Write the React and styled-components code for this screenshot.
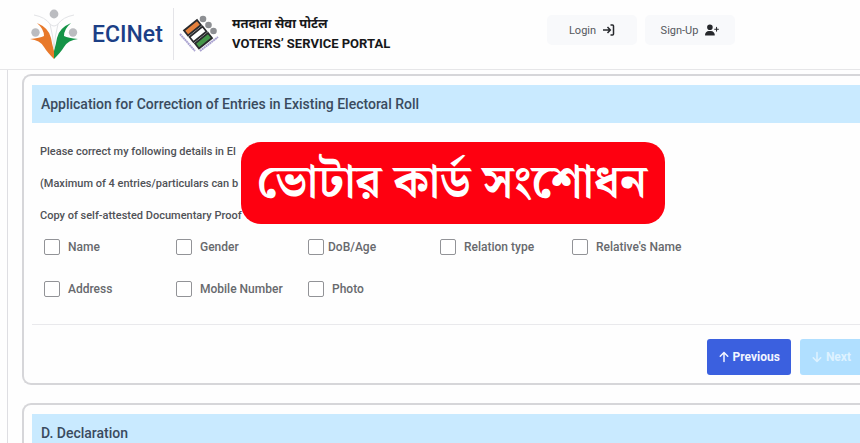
import React from 'react';
import styled, { createGlobalStyle } from 'styled-components';
import { FaUserPlus, FaArrowUp, FaArrowDown } from 'react-icons/fa6';

const GlobalStyle = createGlobalStyle`
  * {
    box-sizing: border-box;
  }

  body {
    margin: 0;
    background: #fefefe;
    color: #3c3f44;
    font-family: Roboto, 'Noto Sans', sans-serif;
    overflow: hidden;
  }
`;

const Page = styled.div`
  position: relative;
  height: 100vh;
  overflow: hidden;
`;

const Header = styled.header`
  display: flex;
  align-items: flex-start;
  height: 70px;
  padding-left: 28px;
  border-bottom: 1px solid #e6e6e8;
`;

const Brand = styled.a`
  display: flex;
  align-items: center;
  width: 146px;
  height: 52px;
  margin-top: 8px;
  border-right: 1px solid #e4e4e8;
  color: #1c3f86;
  font-size: 23px;
  font-weight: 500;
  text-decoration: none;

  svg {
    margin-right: 12px;
  }
`;

const Portal = styled.a`
  display: flex;
  align-items: center;
  gap: 12px;
  width: 373px;
  height: 52px;
  margin-top: 8px;
  padding-left: 5px;
  color: #17181a;
  text-decoration: none;
`;

const PortalText = styled.span`
  display: flex;
  flex-direction: column;
  font-size: 13px;
  font-weight: 700;
  line-height: 20px;
`;

const Nav = styled.nav`
  display: flex;
  gap: 8px;
  margin-top: 15px;
`;

const NavButton = styled.button`
  display: flex;
  align-items: center;
  justify-content: center;
  gap: 7px;
  width: 90px;
  height: 30px;
  padding: 0;
  border: 0;
  border-radius: 5px;
  background: #f8f9fb;
  color: #55585d;
  font: 400 11px Roboto, sans-serif;

  svg {
    color: #26282c;
  }
`;

const Main = styled.main`
  display: flex;
  flex-direction: column;
  gap: 18px;
  margin-left: 7px;
  padding: 4px 0 0 14px;
  border-left: 1px solid #dedee2;
`;

const Card = styled.section`
  padding: 9px 0 0 8px;
  border: 2px solid #d6d6d9;
  border-right: 0;
  border-radius: 9px 0 0 9px;
`;

const CardTitle = styled.h2`
  margin: 0;
  padding: 0 9px;
  background: #c9eaff;
  color: #3a4b5e;
  font-size: 14px;
  font-weight: 500;
  line-height: 38px;
`;

const Notes = styled.div`
  padding: 13px 8px 0;

  p {
    margin: 0;
    color: #505257;
    font-size: 11px;
    font-weight: 500;
    line-height: 32px;
  }
`;

const Options = styled.div`
  display: grid;
  grid-template-columns: repeat(5, 132px);
  row-gap: 26px;
  padding: 7px 0 27px 12px;
`;

const Option = styled.label`
  display: flex;
  align-items: center;
  gap: ${(props) => (props.$tight ? '4px' : '8px')};
  height: 16px;
  color: #67696d;
  font-size: 12px;
  font-weight: 500;
  white-space: nowrap;
`;

const Checkbox = styled.input`
  appearance: none;
  width: 16px;
  height: 16px;
  margin: 0;
  border: 1px solid #929397;
  border-radius: 2px;
  background: #fff;

  &:checked {
    background: #3b5fe0;
  }
`;

const Actions = styled.div`
  display: flex;
  justify-content: flex-end;
  gap: 9px;
  padding: 14px 0 8px;
  border-top: 1px solid #e9e9ec;
`;

const ActionButton = styled.button`
  display: flex;
  align-items: center;
  justify-content: center;
  gap: 3px;
  height: 36px;
  padding: 0 11px;
  border: 0;
  border-radius: 3px;
  background: #3b60df;
  color: #f2f5ff;
  font: 700 12px Roboto, sans-serif;

  &:disabled {
    padding-right: 9px;
    border-radius: 3px 0 0 3px;
    background: #b0dfff;
    color: #def2ff;
  }
`;

const Banner = styled.div`
  position: absolute;
  top: 142px;
  left: 241px;
  padding: 2px 18px 0 16px;
  border-radius: 20px;
  background: #fe0010;
  color: #fff;
  font-family: 'Noto Serif Bengali', 'Noto Sans Bengali', 'Lohit Bengali', serif;
  font-size: 47px;
  font-weight: 700;
  line-height: 80px;
  white-space: nowrap;
`;

const EciLogo = () => (
  <svg width="52" height="52" viewBox="0 0 52 52" aria-hidden="true">
    <g fill="#bbbcc0">
      <circle cx="26" cy="6" r="4.4" />
      <circle cx="7.5" cy="24.5" r="4.2" />
      <circle cx="45" cy="24.5" r="4.2" />
    </g>
    <path
      d="M6 7Q17 9 22 16Q26 20 30 16Q35 9 46 7M22 16Q25 28 26 40M30 16Q27 28 26 40"
      fill="none"
      stroke="#e2e3e6"
      strokeWidth="1"
    />
    <path d="M9 15Q21 20 23 30Q24 36 26 43V51Q19 44 16 39Q12 32 2 31Q12 30 16 28Q16 21 9 15Z" fill="#e8792b" />
    <path d="M43 15Q31 20 29 30Q28 36 26 43V51Q33 44 36 39Q40 32 50 31Q40 30 36 28Q36 21 43 15Z" fill="#159447" />
  </svg>
);

const PortalLogo = () => (
  <svg width="41" height="38" viewBox="0 0 41 38" aria-hidden="true">
    <g fill="#8d8f93">
      <circle cx="24" cy="4" r="3.3" />
      <circle cx="29.5" cy="10" r="3.3" />
      <circle cx="34.5" cy="16" r="3.3" />
    </g>
    <g stroke="#292a2d" strokeWidth="1.8">
      <path d="M5 15.5L18 5L22 10L9 20.5Z" fill="#e5813d" />
      <path d="M10.5 22L23.5 11.5L27.5 16.5L14.5 27Z" fill="#fff" />
      <path d="M16 28.5L29 18L33 23L20 33.5Z" fill="#45964a" />
    </g>
    <path d="M1 19L16 36M21 36L39 22" fill="none" stroke="#a9a2d0" strokeWidth="2" strokeDasharray="2 .4" />
  </svg>
);

const LoginIcon = () => (
  <svg width="12" height="12" viewBox="0 0 12 12" fill="none" stroke="currentColor" strokeWidth="1.5" aria-hidden="true">
    <path d="M0 6H7M4.5 3L7.3 6L4.5 9M7.5 1H9.5Q10.5 1 10.5 2V10Q10.5 11 9.5 11H7.5" />
  </svg>
);

const options = [
  { label: 'Name' },
  { label: 'Gender' },
  { label: 'DoB/Age', tight: true },
  { label: 'Relation type' },
  { label: "Relative's Name" },
  { label: 'Address' },
  { label: 'Mobile Number' },
  { label: 'Photo' },
];

const App = () => {
  return (
    <Page>
      <GlobalStyle />
      <Header>
        <Brand href="#">
          <EciLogo />
          ECINet
        </Brand>
        <Portal href="#">
          <PortalLogo />
          <PortalText>
            <span lang="hi">मतदाता सेवा पोर्टल</span>
            <span>VOTERS’ SERVICE PORTAL</span>
          </PortalText>
        </Portal>
        <Nav>
          <NavButton type="button">
            Login
            <LoginIcon />
          </NavButton>
          <NavButton type="button">
            Sign-Up
            <FaUserPlus size={14} />
          </NavButton>
        </Nav>
      </Header>
      <Main>
        <Card>
          <CardTitle>Application for Correction of Entries in Existing Electoral Roll</CardTitle>
          <Notes>
            <p>Please correct my following details in El</p>
            <p>(Maximum of 4 entries/particulars can b</p>
            <p>Copy of self-attested Documentary Proof</p>
          </Notes>
          <Options>
            {options.map(({ label, tight }) => (
              <Option key={label} $tight={tight}>
                <Checkbox type="checkbox" />
                {label}
              </Option>
            ))}
          </Options>
          <Actions>
            <ActionButton type="button">
              <FaArrowUp size={12} />
              Previous
            </ActionButton>
            <ActionButton type="button" disabled>
              <FaArrowDown size={12} />
              Next
            </ActionButton>
          </Actions>
        </Card>
        <Card>
          <CardTitle>D. Declaration</CardTitle>
        </Card>
      </Main>
      <Banner lang="bn">ভোটার কার্ড সংশোধন</Banner>
    </Page>
  );
};

export default App;
